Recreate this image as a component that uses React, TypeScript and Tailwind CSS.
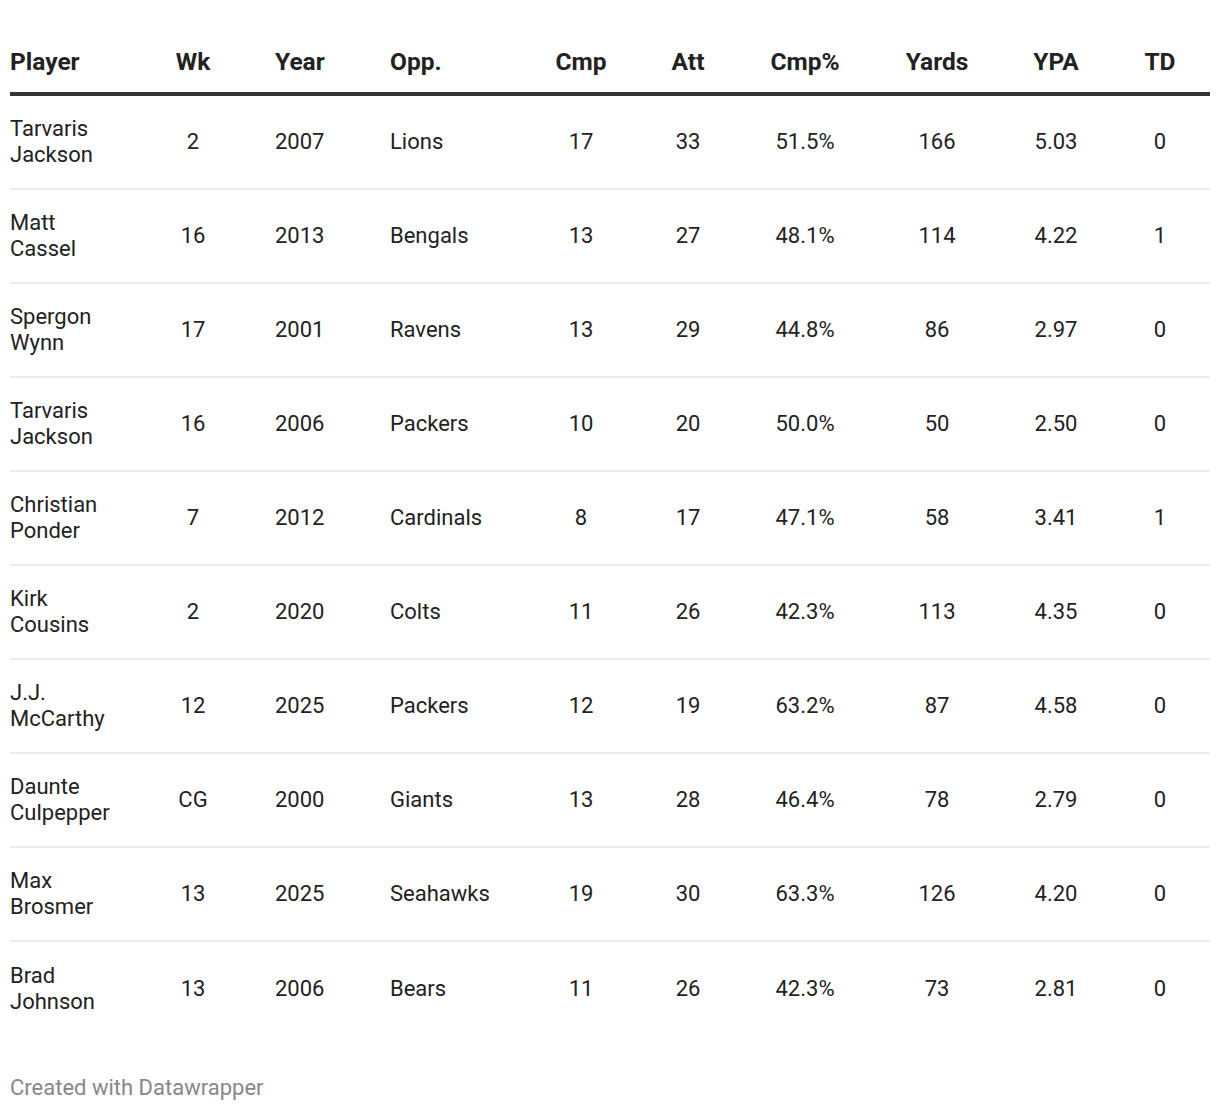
import React from 'react'

const rows = [
  { first: 'Tarvaris', last: 'Jackson', wk: '2', year: '2007', opp: 'Lions', cmp: '17', att: '33', pct: '51.5%', yds: '166', ypa: '5.03', td: '0' },
  { first: 'Matt', last: 'Cassel', wk: '16', year: '2013', opp: 'Bengals', cmp: '13', att: '27', pct: '48.1%', yds: '114', ypa: '4.22', td: '1' },
  { first: 'Spergon', last: 'Wynn', wk: '17', year: '2001', opp: 'Ravens', cmp: '13', att: '29', pct: '44.8%', yds: '86', ypa: '2.97', td: '0' },
  { first: 'Tarvaris', last: 'Jackson', wk: '16', year: '2006', opp: 'Packers', cmp: '10', att: '20', pct: '50.0%', yds: '50', ypa: '2.50', td: '0' },
  { first: 'Christian', last: 'Ponder', wk: '7', year: '2012', opp: 'Cardinals', cmp: '8', att: '17', pct: '47.1%', yds: '58', ypa: '3.41', td: '1' },
  { first: 'Kirk', last: 'Cousins', wk: '2', year: '2020', opp: 'Colts', cmp: '11', att: '26', pct: '42.3%', yds: '113', ypa: '4.35', td: '0' },
  { first: 'J.J.', last: 'McCarthy', wk: '12', year: '2025', opp: 'Packers', cmp: '12', att: '19', pct: '63.2%', yds: '87', ypa: '4.58', td: '0' },
  { first: 'Daunte', last: 'Culpepper', wk: 'CG', year: '2000', opp: 'Giants', cmp: '13', att: '28', pct: '46.4%', yds: '78', ypa: '2.79', td: '0' },
  { first: 'Max', last: 'Brosmer', wk: '13', year: '2025', opp: 'Seahawks', cmp: '19', att: '30', pct: '63.3%', yds: '126', ypa: '4.20', td: '0' },
  { first: 'Brad', last: 'Johnson', wk: '13', year: '2006', opp: 'Bears', cmp: '11', att: '26', pct: '42.3%', yds: '73', ypa: '2.81', td: '0' },
]

const grid = 'grid grid-cols-[150px_66px_164px_140px_102px_112px_122px_142px_96px_106px]'

export default function App() {
  return (
    <div className="bg-white w-[1220px] min-h-[1110px] px-[10px] pt-[47px] text-[#222] font-['Roboto','Liberation_Sans',sans-serif]">
      {/* Header */}
      <div className={`${grid} items-center text-[24.5px] font-bold leading-[30px] pb-[15px] border-b-4 border-[#333]`}>
        <div>Player</div>
        <div className="text-center">Wk</div>
        <div className="pl-[49px]">Year</div>
        <div>Opp.</div>
        <div className="text-center">Cmp</div>
        <div className="text-center">Att</div>
        <div className="text-center">Cmp%</div>
        <div className="text-center">Yards</div>
        <div className="text-center">YPA</div>
        <div className="text-center pl-[6px]">TD</div>
      </div>

      {/* Rows */}
      {rows.map((r, i) => (
        <div
          key={i}
          className={`${grid} items-center h-[94px] text-[22px] leading-[26px] ${i < rows.length - 1 ? 'border-b-2 border-[#ededed]' : ''}`}
        >
          <div>
            <span className="block">{r.first}</span>
            <span className="block">{r.last}</span>
          </div>
          <div className="text-center">{r.wk}</div>
          <div className="pl-[49px]">{r.year}</div>
          <div>{r.opp}</div>
          <div className="text-center">{r.cmp}</div>
          <div className="text-center">{r.att}</div>
          <div className="text-center">{r.pct}</div>
          <div className="text-center">{r.yds}</div>
          <div className="text-center">{r.ypa}</div>
          <div className="text-center pl-[6px]">{r.td}</div>
        </div>
      ))}

      <div className="mt-[39px] text-[22px] leading-[26px] text-[#888]">Created with Datawrapper</div>
    </div>
  )
}
